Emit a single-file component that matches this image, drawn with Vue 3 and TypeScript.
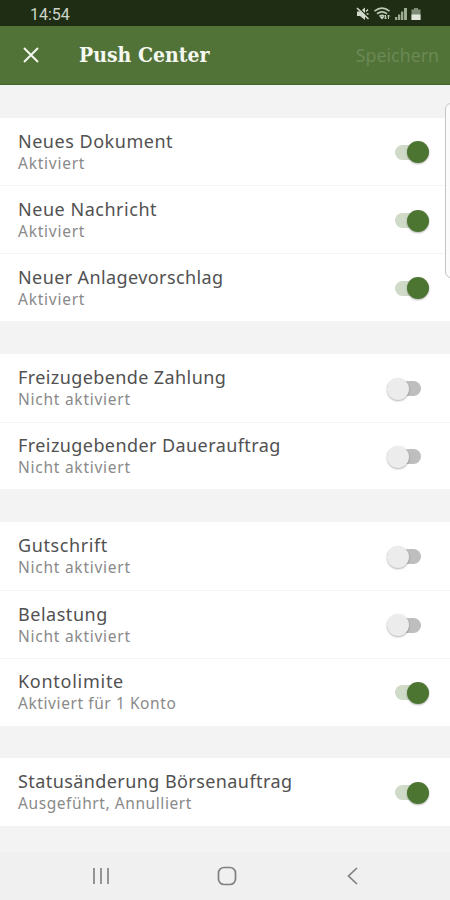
<script setup lang="ts">
interface Setting {
  title: string
  status: string
  on: boolean
  titleTracking: number
  statusTracking: number
}

const groups: Setting[][] = [
  [
    { title: 'Neues Dokument', status: 'Aktiviert', on: true, titleTracking: 0.52, statusTracking: 0.75 },
    { title: 'Neue Nachricht', status: 'Aktiviert', on: true, titleTracking: 0.53, statusTracking: 0.75 },
    { title: 'Neuer Anlagevorschlag', status: 'Aktiviert', on: true, titleTracking: 0.4, statusTracking: 0.75 },
  ],
  [
    { title: 'Freizugebende Zahlung', status: 'Nicht aktiviert', on: false, titleTracking: 0.4, statusTracking: 0.75 },
    { title: 'Freizugebender Dauerauftrag', status: 'Nicht aktiviert', on: false, titleTracking: 0.42, statusTracking: 0.75 },
  ],
  [
    { title: 'Gutschrift', status: 'Nicht aktiviert', on: false, titleTracking: 0.6, statusTracking: 0.75 },
    { title: 'Belastung', status: 'Nicht aktiviert', on: false, titleTracking: 0.53, statusTracking: 0.75 },
    { title: 'Kontolimite', status: 'Aktiviert für 1 Konto', on: true, titleTracking: 0.73, statusTracking: 0.58 },
  ],
  [
    { title: 'Statusänderung Börsenauftrag', status: 'Ausgeführt, Annulliert', on: true, titleTracking: 0.42, statusTracking: 0.58 },
  ],
]
</script>

<template>
  <div class="screen">
    <div class="statusbar">
      <span class="clock">14:54</span>
      <svg class="indicators" width="70" height="16" viewBox="0 0 70 16">
        <g fill="#d3dacd">
          <path d="M2 5.500h3l5-4v12.500l-5-4H2z" />
          <path d="M11 5.500l2-2M11.500 8h2" stroke="#d3dacd" stroke-width="1.300" />
          <path d="M3 1l11 11" stroke="#1e2d13" stroke-width="1.300" />
          <path d="M2 2l11.500 11" stroke="#d3dacd" stroke-width="1.600" />
        </g>
        <g fill="none" stroke="#bdc7b5" stroke-width="1.700">
          <path d="M19.500 5.200q7.500-6 15 0M22 7.800q5-3.700 10 0M24.500 10.200q2.500-1.700 5 0" />
          <path d="M30.500 9v4M29 11.500l1.500 1.500 1.500-1.500M33.500 13V9M32 10.500l1.500-1.500 1.500 1.500" stroke-width="1" />
        </g>
        <path d="M24.500 10.500h5L27 13.500z" fill="#d3dacd" />
        <g fill="#9cab93">
          <path d="M40 11h2.300v3H40zM43 8.500h2.300V14H43zM46 5.500h2.300V14H46z" />
          <path d="M49 2h3v12h-3z" />
        </g>
        <path d="M59 2h4v1.500h2.500V14h-9V3.500H59z" fill="#7f8d76" />
        <path d="M56.500 8.500h9V14h-9z" fill="#e1e6dd" />
      </svg>
    </div>
    <header class="appbar">
      <svg class="close" width="18" height="18" viewBox="0 0 18 18">
        <path d="M2 2l14 14M16 2L2 16" stroke="#f3f6ef" stroke-width="2" fill="none" />
      </svg>
      <h1>Push Center</h1>
      <span class="save">Speichern</span>
    </header>
    <main>
      <section v-for="(group, i) in groups" :key="i" class="group">
        <div v-for="item in group" :key="item.title" class="row">
          <div class="texts">
            <div class="title"><span :style="{ letterSpacing: item.titleTracking + 'px' }">{{ item.title }}</span></div>
            <div class="status"><span :style="{ letterSpacing: item.statusTracking + 'px' }">{{ item.status }}</span></div>
          </div>
          <div class="toggle" :class="{ on: item.on }"><span class="knob"></span></div>
        </div>
      </section>
    </main>
    <nav class="navbar">
      <svg width="18" height="18" viewBox="0 0 18 18"><path d="M2 1v16M9 1v16M16 1v16" stroke="#858585" stroke-width="1.700" /></svg>
      <svg width="20" height="20" viewBox="0 0 20 20"><rect x="1.500" y="1.500" width="17" height="17" rx="5.500" fill="none" stroke="#808080" stroke-width="1.700" /></svg>
      <svg width="18" height="18" viewBox="0 0 18 18"><path d="M13 1L4.500 9l8.500 8" fill="none" stroke="#808080" stroke-width="1.700" /></svg>
    </nav>
    <div class="edge-panel"></div>
  </div>
</template>

<style>
body {
  margin: 0;
  background: #f3f3f3;
}
</style>

<style scoped>
.screen {
  position: relative;
  display: flex;
  flex-direction: column;
  width: 450px;
  height: 900px;
  overflow: hidden;
  background: #f3f3f3;
  font-family: "Noto Sans", sans-serif;
}
.statusbar {
  box-sizing: border-box;
  display: flex;
  align-items: center;
  justify-content: space-between;
  height: 26px;
  padding: 3px 25px 0 30px;
  background: #1e2d13;
}
.clock {
  font: 16px/20px Roboto, sans-serif;
  color: #cdd5c8;
}
.indicators {
  margin-bottom: 2px;
}
.appbar {
  box-sizing: border-box;
  display: flex;
  align-items: center;
  height: 59px;
  padding: 0 11px 0 22px;
  background: #527338;
  border-bottom: 1px solid #42652a;
}
h1 {
  margin: 0 auto 0 39px;
  font: bold 21px/30px "DejaVu Serif Condensed", "DejaVu Serif", serif;
  color: #f5f8f1;
}
.save {
  font-size: 17.800px;
  color: #6b8855;
}
main {
  flex: 1;
  display: flex;
  flex-direction: column;
  gap: 32.500px;
  padding-top: 32.500px;
}
.group {
  background: #fff;
}
.row {
  box-sizing: border-box;
  display: flex;
  justify-content: space-between;
  height: 67.900px;
  padding: 12.350px 21px 0 18px;
}
.row + .row {
  border-top: 1px solid #f4f4f4;
  padding-top: 11.700px;
}
.title {
  height: 23px;
  font-size: 18px;
  line-height: 23px;
  color: #515151;
  white-space: nowrap;
}
.status {
  font-size: 15.500px;
  line-height: 21px;
  color: #8a8a8a;
  white-space: nowrap;
}
.toggle {
  box-sizing: border-box;
  display: flex;
  align-items: center;
  width: 34px;
  height: 15px;
  margin: 15px 8px 0 0;
  border-radius: 8px;
  background: #bebebe;
}
.toggle.on {
  justify-content: flex-end;
  margin-right: 0;
  background: #cfdac8;
}
.knob {
  width: 22px;
  height: 22px;
  flex: none;
  border-radius: 50%;
  background: #ececec;
  box-shadow: 0 1px 2px rgba(0, 0, 0, 0.3);
}
.on .knob {
  background: #4b7530;
}
.navbar {
  display: flex;
  align-items: center;
  justify-content: space-between;
  height: 48px;
  padding: 0 88px 0 92px;
  background: #f0f0f0;
}
.edge-panel {
  position: absolute;
  top: 103px;
  right: -8px;
  box-sizing: border-box;
  width: 13px;
  height: 175px;
  border: 1.500px solid #c5c5c5;
  border-radius: 6px;
  background: #fbfbfb;
}
</style>
